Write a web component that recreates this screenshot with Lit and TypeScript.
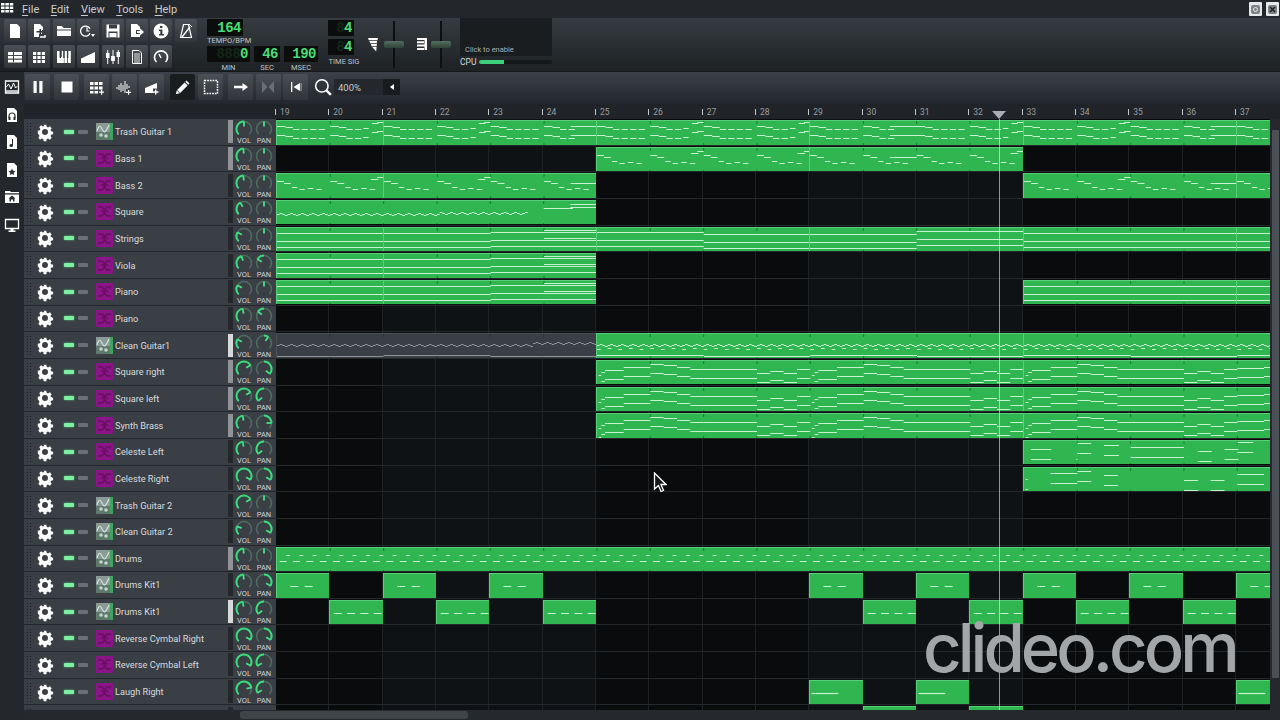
import { LitElement, html, css, svg } from "lit";
import { customElement } from "lit/decorators.js";

const B = 160 / 3;
type Note = [number, number, number];
type Clip = [number, number, boolean?];

function add(out: Note[], bar: number, list: Note[], dy = 0) {
  for (const [s, l, y] of list) out.push([bar + s, l, y + dy]);
}
const riffA: Note[] = [[0, .16, 6], [.16, .14, 7], [.3, .12, 9], [.46, .12, 9], [.62, .12, 9], [.78, .12, 9]];
const riffB: Note[] = [[0, .16, 6], [.16, .14, 7], [.3, .12, 9], [.46, .12, 9], [.62, .1, 8]];

function trash(): Note[] {
  const o: Note[] = [];
  for (let b = 0; b < 19; b++) {
    if (b % 2 === 0) {
      add(o, b, riffA, -1); add(o, b, riffA, 8);
    } else if (b % 6 === 5) {
      add(o, b, riffB.slice(0, 4), -1); add(o, b, riffB.slice(0, 4), 8);
      o.push([b + .5, .5, 5], [b + .5, .5, 14]);
    } else {
      add(o, b, riffB, -1); add(o, b, riffB, 8);
      o.push([b + .78, .12, 2], [b + .88, .12, 1], [b + .78, .12, 11], [b + .88, .12, 10]);
    }
  }
  return o;
}
function bass(): Note[] {
  const o: Note[] = [];
  for (let b = 0; b < 19; b++) {
    add(o, b, [[0, .13, 7], [.13, .13, 9], [.28, .1, 13], [.42, .1, 15], [.58, .1, 14], [.74, .1, 15]]);
    if (b % 2 === 1 && b % 6 !== 5) o.push([b + .76, .14, 5], [b + .88, .12, 3]);
    if (b % 6 === 5) o.push([b + .5, .5, 9]);
  }
  return o;
}
function square(): Note[] {
  const o: Note[] = [];
  const seq = [13, 12, 13, 14];
  for (let i = 0; i < 94; i++) o.push([i * .05, .05, seq[i % 4] + (i > 60 ? -1 : 0)]);
  o.push([5, .55, 7], [5.5, .5, 3], [5.5, .5, 6]);
  return o;
}
function strings(): Note[] {
  const o: Note[] = [];
  const lv = [5, 5, 4, 4, 6, 6, 3, 5];
  for (let b = 0; b < 19; b += 2) {
    const y = lv[(b / 2) % 8];
    o.push([b, 2, y], [b, 2, y + 8], [b, 2, y + 14]);
    if (b === 4) o.push([b + 1, 1, y - 2], [b + 1, 1, y + 6]);
  }
  return o;
}
function wave(): Note[] {
  const o: Note[] = [];
  const seq = [11, 10, 11, 12];
  for (let i = 0; i < 380; i++) o.push([i * .05, .05, seq[i % 4] + (i >= 96 && i < 120 ? -2 : 0)]);
  for (let b = 0; b < 19; b += 2) o.push([b, 2, b % 4 === 2 ? 21 : 22]);
  return o;
}
function wave2(): Note[] {
  const o: Note[] = [...wave()];
  for (let i = 120; i < 380; i += 4) o.push([i * .05, .07, i % 8 === 0 ? 15 : 14]);
  return o;
}
const seqBars: Note[][] = [
  [[.03, .05, 14], [.08, .07, 11], [.15, .35, 9], [.5, .5, 6]],
  [[0, .25, 3], [.25, .25, 4], [.5, .25, 6], [.75, .25, 8]],
  [[0, 1, 8]],
  [[0, .25, 12], [.25, .25, 10], [.5, .25, 12], [.75, .25, 8]],
];
function brass(shift: number): Note[] {
  const o: Note[] = [];
  for (let b = 6; b < 19; b++) {
    const m = b === 18 ? [[0, .5, 7], [.5, .5, 6]] as Note[] : seqBars[(b - 6) % 4];
    add(o, b, m, shift); add(o, b, m, shift + 9);
  }
  return o;
}
function celeste(a: Note[][]): Note[] {
  const o: Note[] = [];
  for (let b = 14; b < 19; b++) {
    const m = a[b - 14];
    add(o, b, m); add(o, b, m, 10);
  }
  return o;
}
function drums(): Note[] {
  const o: Note[] = [];
  for (let b = 0; b < 19; b++)
    for (const s of [.05, .3, .55, .8]) o.push([b + s, .13, 13], [b + s + .12, .07, 7]);
  return o;
}
function kit(n: number[]): Note[] {
  const o: Note[] = [];
  for (let b = 0; b < 19; b++) for (const s of n) o.push([b + s, .15, 12]);
  return o;
}
function laugh(): Note[] {
  const o: Note[] = [];
  for (let b = 0; b < 19; b++) o.push([b + .03, .5, 12]);
  return o;
}

const full: Clip[] = [[0, 2], [2, 4], [6, 4], [10, 4], [14, 4], [18, 1]];
const one = (...a: number[]): Clip[] => a.map((s) => [s, 1] as Clip);

interface Track { name: string; img?: boolean; vol: number; pan: number; fader?: number; clips?: Clip[]; notes?: Note[]; }

const tracks: Track[] = [
  { name: "Trash Guitar 1", img: true, vol: 0, pan: 0, fader: 1, clips: full, notes: trash() },
  { name: "Bass 1", vol: -5, pan: 0, fader: 1, clips: [[6, 4], [10, 4]], notes: bass() },
  { name: "Bass 2", vol: -5, pan: 0, clips: [[0, 2], [2, 4], [14, 4], [18, 1]], notes: bass() },
  { name: "Square", vol: -30, pan: 0, clips: [[0, 6]], notes: square() },
  { name: "Strings", vol: -60, pan: 0, clips: full, notes: strings() },
  { name: "Viola", vol: -20, pan: -60, clips: [[0, 2], [2, 4]], notes: strings() },
  { name: "Piano", vol: -60, pan: 0, clips: [[0, 2], [2, 4], [14, 4], [18, 1]], notes: strings() },
  { name: "Piano", vol: -10, pan: -55 },
  { name: "Clean Guitar1", img: true, vol: -60, pan: 35, fader: 2, clips: [[0, 6, true], [6, 8], [14, 5]], notes: wave2() },
  { name: "Square right", vol: 60, pan: 130, fader: 1, clips: [[6, 8], [14, 5]], notes: brass(0) },
  { name: "Square left", vol: 60, pan: -130, fader: 1, clips: [[6, 8], [14, 5]], notes: brass(0) },
  { name: "Synth Brass", vol: -10, pan: 90, fader: 1, clips: [[6, 8], [14, 5]], notes: brass(0) },
  { name: "Celeste Left", vol: -10, pan: -130, clips: [[14, 5]], notes: celeste([
    [[.13, .38, 8], [.98, .02, 18]], [[0, .26, 2], [.5, .28, 4]], [[0, 1, 6]], [[.26, .26, 10], [.76, .26, 8]], [[0, .3, 1]],
  ]) },
  { name: "Celeste Right", vol: 120, pan: 120, clips: [[14, 5]], notes: celeste([
    [[.03, .04, 11], [.5, .5, 5]], [[0, .26, 3], [.5, .26, 7]], [[0, 0, 6]], [[.0, .26, 12], [.5, .26, 12]], [[0, .5, 6]],
  ]) },
  { name: "Trash Guitar 2", img: true, vol: 60, pan: 0 },
  { name: "Clean Guitar 2", img: true, vol: -70, pan: 120 },
  { name: "Drums", img: true, vol: -5, pan: 0, fader: 1, clips: [[0, 19]], notes: drums() },
  { name: "Drums Kit1", img: true, vol: -5, pan: 120, clips: one(0, 2, 4, 10, 12, 14, 16, 18), notes: kit([.25, .52]) },
  { name: "Drums Kit1", img: true, vol: -10, pan: -130, fader: 2, clips: one(1, 3, 5, 11, 13, 15, 17), notes: kit([.07, .32, .57, .82]) },
  { name: "Reverse Cymbal Right", vol: 120, pan: 120 },
  { name: "Reverse Cymbal Left", vol: 120, pan: -120 },
  { name: "Laugh Right", vol: 80, pan: -120, clips: one(10, 12, 18), notes: laugh() },
  { name: "", vol: 100, pan: -100, clips: one(11, 13), notes: [] },
];

const P = (d: string) => svg`<path d=${d} fill="#fff"></path>`;
const S = (d: string, w = 1.5) => svg`<path d=${d} fill="none" stroke="#fff" stroke-width=${w}></path>`;

const icons: Record<string, unknown> = {
  doc: svg`${P("M3 1h7l3 3v11H3z")}`,
  docPlus: svg`${P("M3 1h6l3 3v3h-1v4H8v3H3z")}<path d="M5.500 8h3v-2h1.500v2h2v1.500h-2v2H8.500v-2h-3z" fill="#33383d"></path>${S("M9 14h5v-2")}`,
  folder: svg`${P("M1 3h5l1.500 2H15v1.500H1z")}${P("M1 7.500h14V13H1z")}`,
  recent: svg`${S("M10 5.800a5 5 0 1 0 .1 4.500", 1.300)}${S("M7 4.500v3.500h2.500", 1.200)}${P("M11 11h4l-2 3z")}`,
  save: svg`${P("M1.500 1.500h13v13h-13z")}<path d="M4 1.500h8v4H4zM3.500 8.500h9v6h-9z" fill="#3a3f45"></path><path d="M4.500 10h7v4h-7z" fill="#fff"></path>`,
  exportDoc: svg`${P("M2 1h6l3 3v3H7v4h4v3H2z")}${P("M8 8h3V5.500L15 9l-4 3.500V10H8z")}`,
  info: svg`<circle cx="8" cy="8" r="7.500" fill="#fff"></circle><path d="M7 3h2.400v2H7zM6 6.500h3.400V11H11v1.500H6V11h1.300V8H6z" fill="#363b40"></path>`,
  metro: svg`${S("M5.500 1.500h5l3 13h-11z", 1.200)}${S("M4 14l8-10", 1.300)}${S("M11 1l3 3", 1)}`,
  song: svg`${P("M1 3h14v3H1zM1 6.800h14v3H1zM1 10.600h14v3H1z")}<path d="M6 3h1v10.500H6zM1 6h14v.8H1zM1 9.800h14v.8H1z" fill="#3a3f45"></path>`,
  beat: svg`${P("M2 3h3.200v3H2zM6.400 3h3.200v3H6.400zM10.800 3H14v3h-3.200zM2 7h3.200v3H2zM6.400 7h3.200v3H6.400zM10.800 7H14v3h-3.200zM2 11h3.200v3H2zM6.400 11h3.200v3H6.400zM10.800 11H14v3h-3.200z")}`,
  piano: svg`${P("M1 2h2.800v12H1zM4.600 8h2.800v6H4.600zM8.400 2h2.800v12H8.400zM12 2h2.800v12H12zM3.800 2h1v12h-1z")}${P("M5.800 2h2v12h-2z")}<path d="M3.600 2h1.400v7H3.600zM7.200 2h1.400v7H7.200zM10.900 2h1.400v7h-1.400z" fill="#383d42"></path>`,
  ramp: svg`${P("M1 14V9.500L15 3v11z")}`,
  mixer: svg`${P("M2.200 1h1v3h1.300v5H3.200v6h-1V9H1V4h1.200zM7.500 1h1v6h1.400v5H8.500v3h-1v-3H6.100V7h1.400zM12.800 1h1v2H15v5h-1.200v7h-1V8h-1.300V3h1.300z")}`,
  notes: svg`${S("M3.500 1.500h6.500l2.500 2.500v10.500h-9z", 1)}${S("M5 5h6M5 7h6M5 9h6M5 11h6M5 13h6", .9)}`,
  gauge: svg`${S("M3.500 13a6.500 6.500 0 1 1 9 0", 1.700)}${S("M8 9L6 5", 1.500)}`,
  pause: svg`${P("M3.500 2h3.200v12H3.500zM9.300 2h3.200v12H9.300z")}`,
  stop: svg`${P("M2.500 2.500h11v11h-11z")}`,
  beatPlus: svg`${P("M1 3h3.500v3H1zM5.500 3H9v3H5.500zM10 3h3.500v3H10zM1 7.500h3.500v3H1zM5.500 7.500H9v3H5.500zM10 7.500h3.500v3H10zM1 12h3.500v2.500H1zM5.500 12H9v2.500H5.500z")}${P("M12 10.500h1.200v2H15v1.200h-1.800v2H12v-2h-2v-1.200h2z")}`,
  wavePlus: svg`${S("M1 8v2M3 6v5M5 4v9M7 6v6M9 2v12M11 5v5M13 7v2", 1)}${P("M12 11h1.200v1.800H15V14h-1.800v1.800H12V14h-2v-1.200h2z")}`,
  rampPlus: svg`${P("M1 14V9L13 4v5.500H9V14z")}${P("M11 10.500h1.400v1.800H14.500v1.400h-2.100V15.500H11v-1.800H9v-1.400h2z")}`,
  pencil: svg`${P("M11.500 1.500l3 3-1.200 1.200-3-3zM9.600 3.400l3 3-7.500 7.500-3-3zM1.700 11.400l2.900 2.900-3.800 .9z")}`,
  select: svg`<path d="M1.500 1.500h13v13h-13z" fill="none" stroke="#fff" stroke-width="1.500" stroke-dasharray="1.700 1"></path>`,
  arrow: svg`${P("M1 6.800h8.500V4L15 8l-5.500 4V9.200H1z")}`,
  loop: svg`<path d="M2 2l5.500 6L2 14zM14 2L8.500 8l5.500 6z" fill="#6a6f75"></path>`,
  skip: svg`${P("M3 3h1.300v10H3zM12 4v8L5.500 8z")}<path d="M12.500 4h1.300v8h-1.300z" fill="#8a8f95"></path>`,
  mag: svg`<circle cx="7" cy="7" r="5.500" fill="none" stroke="#fff" stroke-width="1.400"></circle>${S("M11 11l4 4", 2)}`,
  vol: svg`${P("M1 2h10l-.6 2.200H1.800zM2.400 5h7.800l-.5 2.200H3.200zM3.800 8h6.200l-.4 2.200H4.600zM5.200 11h4.400L9.200 15.500z")}`,
  pitch: svg`${P("M3 2h9v2H3zM3 5.300h7v2H3zM3 8.600h9v2H3zM3 11.900h7v2H3z")}<path d="M10.500 2H13v12h-2.500z" fill="#fff"></path>`,
  sInst: svg`<path d="M1.500 2h13v12h-13z" fill="none" stroke="#fff" stroke-width="1.300"></path>${S("M2.500 8l2-3 2.500 5 2.500-6 2 5 2-2", 1)}${S("M2 12h12", 1.400)}`,
  sHead: svg`${P("M3 1h7l3 3v11H3z")}<path d="M5 11V9a3 3 0 0 1 6 0v2" fill="none" stroke="#2a2e32" stroke-width="1.200"></path><path d="M4.500 10h2v3h-2zM9.500 10h2v3h-2z" fill="#2a2e32"></path>`,
  sNote: svg`${P("M3 1h7l3 3v11H3z")}<path d="M8 5h1v6.500a1.800 1.500 0 1 1-1-1.300z" fill="#2a2e32"></path>`,
  sStar: svg`${P("M3 1h7l3 3v11H3z")}<path d="M8 6.500l1.100 2.200 2.400.3-1.800 1.700.5 2.400L8 11.900l-2.200 1.200.5-2.400L4.500 9l2.400-.3z" fill="#2a2e32"></path>`,
  sHome: svg`${P("M1 2h5l1 1h8v1.300H1z")}${P("M1 5.500h14V14H1z")}<path d="M8 6.500l3.500 3h-1v3H9v-2H7v2H5.500v-3h-1z" fill="#2a2e32"></path>`,
  sMon: svg`<path d="M1.500 2.500h13v9h-13z" fill="none" stroke="#fff" stroke-width="1.300"></path>${P("M6.500 12h3v1.500h2V15h-7v-1.500h2z")}`,
  win: svg`${P("M0 1h4v3H0zM5 1h4v3H5zM10 1h4v3h-4zM0 5h4v3H0zM5 5h4v3H5zM10 5h4v3h-4zM0 9h4v3H0zM5 9h4v3H5zM10 9h4v3h-4z")}`,
};

const ic = (n: string, size = 16) =>
  html`<svg width=${size} height=${size} viewBox="0 0 16 16">${icons[n]}</svg>`;

function pol(a: number, r: number) {
  const t = (a * Math.PI) / 180;
  return [9 + r * Math.sin(t), 9 - r * Math.cos(t)];
}
function arc(a: number, b: number, r: number) {
  const [lo, hi] = a < b ? [a, b] : [b, a];
  const [x1, y1] = pol(lo, r);
  const [x2, y2] = pol(hi, r);
  return `M${x1.toFixed(2)} ${y1.toFixed(2)}A${r} ${r} 0 ${hi - lo > 180 ? 1 : 0} 1 ${x2.toFixed(2)} ${y2.toFixed(2)}`;
}
function knob(val: number, from: number, label: string) {
  const [x1, y1] = pol(val, 2.5);
  const [x2, y2] = pol(val, 7.5);
  return html`<div class="knob">
    <svg width="18" height="18" viewBox="0 0 18 18">
      <path d=${arc(-135, 135, 7.5)} fill="none" stroke="#4f6b5e" stroke-width="1.600"></path>
      <path d=${arc(from, val, 7.5)} fill="none" stroke="#38dc78" stroke-width="2"></path>
      <path d="M${x1} ${y1}L${x2} ${y2}" stroke="#45e085" stroke-width="1.800"></path>
    </svg>
    ${label ? html`<span>${label}</span>` : ""}
  </div>`;
}

const instA = html`<svg width="17" height="17" viewBox="0 0 17 17">
  <rect width="17" height="17" fill="#8a9a96"></rect>
  <rect x="14" width="3" height="17" fill="#3fa45e"></rect>
  <rect y="9" width="14" height="8" fill="#5f7a6c"></rect>
  <path d="M1 8C3 2 4 2 6 6S9 11 13 2" fill="none" stroke="#d8e8df" stroke-width="1.100"></path>
  <circle cx="5" cy="12" r="1.800" fill="#c6d2cc"></circle><circle cx="10" cy="13" r="1.800" fill="#c6d2cc"></circle>
</svg>`;
const instB = html`<svg width="17" height="17" viewBox="0 0 17 17">
  <rect width="17" height="17" rx="1" fill="#8b1588"></rect>
  <path d="M2 4h4l2 2v2H5M15 4h-4L9 6v2h3M2 13h4l2-2V9M15 13h-4l-2-2V9" fill="none" stroke="#65105f" stroke-width="1.300"></path>
</svg>`;

const lcdText = (ghost: string, value: string) =>
  html`<span class="seg">${ghost ? html`<em>${ghost}</em>` : ""}${value}</span>`;

@customElement("app-root")
export class AppRoot extends LitElement {
  static styles = css`
    :host { display: block; width: 1280px; height: 720px; position: relative; overflow: hidden; background: #24282c;
      font-family: Roboto, "Liberation Sans", sans-serif; color: #d6d9dc; }
    .menu { height: 18px; display: flex; align-items: center; background: #23272b; padding-left: 1px; }
    .menu .items { display: flex; margin-left: 7px; gap: 11.500px; font-size: 11px; color: #c9ccd0; }
    .menu u { text-decoration-thickness: 1px; text-underline-offset: 1.500px; }
    .win { margin-left: auto; display: flex; gap: 4px; padding-right: 1px; }
    .win i { width: 13px; height: 14px; background: #e6e8e9; border-radius: 1px; display: flex; align-items: center; justify-content: center; }
    .top { height: 53px; display: flex; background: linear-gradient(#363c41, #1d2124); border-bottom: 1px solid #15181a; }
    .tbtns { width: 198px; padding: 1px 0 0 4px; display: grid; grid-template-columns: repeat(8, 22px); grid-auto-rows: 23px; gap: 3px 2.400px; align-content: start; }
    .btn { display: flex; align-items: center; justify-content: center; border-radius: 2px;
      background: linear-gradient(#4b5056, #31353a); }
    .lcds { width: 117px; margin-left: 5px; }
    .lcd { background: #0a0d0c; display: flex; justify-content: flex-end; align-items: center; font-family: "Liberation Mono", monospace;
      font-weight: 700; color: #47dd76; border-radius: 1px; padding-right: 2px; box-sizing: border-box; font-size: 14px; letter-spacing: -.5px; line-height: 16px; }
    .seg em { color: #13261a; font-style: normal; }
    .cap { font-size: 7.500px; color: #bfc3c6; text-align: center; line-height: 9px; white-space: nowrap; }
    .tempo { width: 36px; height: 17px; margin-top: 1px; }
    .tcap { width: 45px; text-align: left; margin-top: 0; }
    .lrow { display: flex; gap: 4px; margin-top: 1px; }
    .lrow .cap { margin-top: 1px; }
    .min { width: 43px; height: 16px; }
    .sec { width: 26px; height: 16px; }
    .msec { width: 34px; height: 16px; }
    .ts { width: 38px; margin-left: 4px; padding-top: 2px; }
    .ts .lcd { width: 26px; height: 16px; margin-bottom: 3px; }
    .ts .cap { width: 32px; margin-top: -1px; }
    .mf { display: flex; width: 47px; flex: none; align-items: center; }
    .mf .gl { width: 18px; display: flex; justify-content: center; margin-top: -2px; }
    .fader { width: 20px; height: 47px; position: relative; display: flex; justify-content: center; align-items: center; margin-top: -1px; }
    .fader::before { content: ""; width: 2px; height: 47px; background: #0c0e10; }
    .fader::after { content: ""; position: absolute; left: 0; width: 20px; height: 7px; top: 20px; background: linear-gradient(#556f62, #2f4238); border-radius: 2px; }
    .cpu { width: 92px; flex: none; }
    .graph { height: 38px; background: #1a1d20; display: flex; align-items: flex-end; font-size: 7.500px; color: #a9adb1; padding: 0 0 2px 5px; box-sizing: border-box; }
    .cl { display: flex; align-items: center; gap: 3px; font-size: 8.500px; color: #d6d9dc; margin-top: 1px; }
    .cbar { flex: 1; height: 4px; background: #14181a; border-radius: 2px; overflow: hidden; }
    .cbar b { display: block; width: 25px; height: 100%; background: #3ad07c; }
    .main { display: flex; height: 648px; }
    .side { width: 24px; display: flex; flex-direction: column; align-items: center; padding-top: 7px; gap: 11.500px; background: #24282c; }
    .content { flex: 1; min-width: 0; display: flex; flex-direction: column; }
    .tb2 { height: 32px; display: flex; align-items: center; background: linear-gradient(#3c4149, #23272c); padding: 0 0 2px 1px; box-sizing: border-box; }
    .tb2 .btn { width: 25px; height: 26px; }
    .tb2 .on { background: #1a1d20; }
    .g1 { display: flex; gap: 4px; }
    .g2 { display: flex; gap: 2.500px; margin-left: 5px; }
    .g3 { display: flex; gap: 3px; margin-left: 6px; }
    .g4 { display: flex; gap: 2.500px; margin-left: 5px; }
    .mag { margin-left: 6px; display: flex; }
    .combo { margin-left: 2px; width: 66px; height: 16px; display: flex; background: #24282d; font-size: 9.500px; color: #c6c9cc; align-items: center; padding-left: 4px; box-sizing: border-box; }
    .combo span { flex: 1; }
    .combo i { width: 17px; height: 100%; background: #191c1f; display: flex; align-items: center; justify-content: center; }
    .combo i b { border: 3px solid transparent; border-right: 4px solid #fff; border-left: 0; }
    .ruler { height: 15px; display: grid; grid-template-columns: repeat(19, 53.333px); padding-left: 251px; background: #202428; overflow: hidden; }
    .ruler div { font-size: 8.500px; color: #9a9ea2; position: relative; padding-left: 5px; line-height: 10px; margin-top: 3px; }
    .ruler div::before { content: ""; position: absolute; left: 0; top: 2px; width: 1px; height: 6px; background: #c5c8cb; }
    .body { flex: 1; min-height: 0; display: flex; flex-direction: column; }
    .mid { flex: 1; min-height: 0; display: flex; }
    .rows { width: 1246px; overflow: hidden; }
    .row { height: 26.667px; display: flex; box-sizing: border-box; }
    .hd { width: 252px; flex: none; display: flex; align-items: center; background: #3a3f46; border-bottom: 1.500px solid #23272b; box-sizing: border-box; }
    .grip { width: 6px; height: 20px; margin-left: 2px; background-image: radial-gradient(#1e2226 .6px, transparent .8px); background-size: 3px 3px; }
    .gear { width: 20px; margin-left: 3px; margin-right: 9px; display: flex; }
    .led { width: 10px; height: 4px; background: #7cf0a0; border-radius: 1px; box-shadow: 0 0 2px #50e080; }
    .mute { width: 10px; height: 4px; margin-left: 4px; background: #6a7078; border-radius: 1px; margin-right: 8px; }
    .name { font-size: 9.200px; margin-left: 2px; color: #d8dbde; width: 113px; white-space: nowrap; overflow: hidden; }
    .fd { width: 5px; height: 23px; background: #24282d; }
    .fd.f1 { background: #8f9397; }
    .fd.f2 { background: #d6d8da; }
    .knob { width: 20px; display: flex; flex-direction: column; align-items: center; margin-top: 1px; }
    .knob span { font-size: 7.500px; line-height: 7px; color: #d0d3d6; margin-top: -1px; }
    .k1 { margin-left: 1px; display: flex; }
    .lane { width: 994px; flex: none; display: grid; grid-template-columns: repeat(19, 53.333px); grid-template-rows: 24.500px; overflow: hidden;
      box-sizing: border-box; padding-top: 1px;
      background:
        linear-gradient(#24282b, #24282b) left bottom / 100% 1px no-repeat,
        repeating-linear-gradient(to right, transparent 0 52.333px, #1f2225 52.333px 53.333px),
        linear-gradient(to right, #0a0b0d 107px, #0f1215 107px 320px, #0a0b0d 320px 533px, #0f1215 533px 747px, #0a0b0d 747px); }
    .clip { background: #30b651; border: 1px solid #58cf78; border-width: 1px 0 0 1px; min-width: 0; overflow: hidden; display: flex; box-sizing: border-box; }
    .clip.m { background: #3a3f46; border-color: #4a4f56; }
    .clip svg { flex: none; }
    .vs { width: 10px; background: #25292d; padding: 11px 1px 0 2px; box-sizing: border-box; }
    .vs b { display: block; height: 548px; background: #4b5056; border-radius: 1px; }
    .hs { height: 10px; background: #25292d; padding-left: 216px; display: flex; }
    .hs b { width: 228px; height: 8px; margin-top: 1px; background: #3f4449; border-radius: 3px; }
    .playhead { position: absolute; left: 999px; top: 119px; width: 1px; height: 591px; background: rgba(255,255,255,.55); }
    .tri { position: absolute; left: 992px; top: 111px; width: 0; height: 0; border: 7px solid transparent; border-top: 8px solid #a9acb2; border-bottom: 0; }
    .cursor { position: absolute; left: 653px; top: 472px; }
    .mark { position: absolute; left: 923px; top: 607px; font-family: Inter, "Open Sans", sans-serif; font-weight: 500; font-size: 67px; line-height: 82px; letter-spacing: -4px; color: #a3a6a8; }
  `;

  private clip(t: Track, c: Clip) {
    const [start, len, muted] = c;
    const w = len * B;
    const x0 = start * B;
    const d = (t.notes ?? []).filter(([s, l]) => l > 0 && s + l > start && s < start + len)
      .map(([s, l, y]) => `M${(s * B).toFixed(1)} ${y + .5}h${(l * B).toFixed(1)}`).join("");
    let ticks = "";
    for (let b = start + 1; b < start + len; b++) ticks += `M${(b * B).toFixed(1)} 0v3M${(b * B).toFixed(1)} 22v3`;
    return html`<div class="clip ${muted ? "m" : ""}" style="grid-column:${start + 1} / span ${len}">
      <svg width=${w} height="25" viewBox="${x0} 0 ${w} 25">
        <path d=${ticks} stroke=${muted ? "#2c3036" : "#1b7a37"} stroke-width="1" fill="none"></path>
        <path d=${d} stroke=${muted ? "#8d9298" : "#c6f2d1"} stroke-width="1.200" fill="none"></path>
      </svg>
    </div>`;
  }

  private row(t: Track) {
    return html`<div class="row">
      <div class="hd">
        <div class="grip"></div>
        <div class="gear"><svg width="20" height="20" viewBox="0 0 20 20">
          <path fill="#fff" fill-rule="evenodd" d="M8.500 2h3l.4 2.300 1.500.7 2-1.300 2 2-1.300 2 .7 1.500 2.200.4v3l-2.200.4-.7 1.500 1.300 2-2 2-2-1.300-1.500.7-.4 2.300h-3l-.4-2.300-1.500-.7-2 1.300-2-2 1.300-2-.7-1.500L2 11.500v-3l2.200-.4.700-1.500-1.300-2 2-2 2 1.300 1.500-.7zM10 6.700a3.300 3.300 0 1 0 0 6.600 3.300 3.300 0 0 0 0-6.600z" transform="translate(1 1) scale(.9)"></path>
        </svg></div>
        <div class="led"></div>
        <div class="mute"></div>
        ${t.img ? instA : instB}
        <div class="name">${t.name}</div>
        <div class="fd ${t.fader ? "f" + t.fader : ""}"></div>
        <div class="k1">${knob(t.vol, -135, t.name ? "VOL" : "")}${knob(t.pan, 0, t.name ? "PAN" : "")}</div>
      </div>
      <div class="lane">${(t.clips ?? []).map((c) => this.clip(t, c))}</div>
    </div>`;
  }

  render() {
    const bars = Array.from({ length: 19 }, (_, i) => 19 + i);
    const top = ["doc", "docPlus", "folder", "recent", "save", "exportDoc", "info", "metro", "song", "beat", "piano", "ramp", "mixer", "notes", "gauge"];
    return html`
      <div class="menu">
        ${ic("win", 14)}
        <div class="items">
          <span><u>F</u>ile</span><span><u>E</u>dit</span><span><u>V</u>iew</span><span><u>T</u>ools</span><span><u>H</u>elp</span>
        </div>
        <div class="win">
          <i><svg width="9" height="9" viewBox="0 0 9 9"><rect width="9" height="9" rx="2" fill="#7d8286"></rect><circle cx="4.500" cy="4.500" r="2" fill="none" stroke="#e6e8e9"></circle></svg></i>
          <i><svg width="9" height="9" viewBox="0 0 9 9"><rect width="9" height="9" rx="2" fill="#7d8286"></rect><path d="M2 2l5 5M7 2l-5 5" stroke="#1c1f22" stroke-width="1.400"></path></svg></i>
        </div>
      </div>
      <div class="top">
        <div class="tbtns">${top.map((n) => html`<div class="btn">${ic(n)}</div>`)}</div>
        <div class="lcds">
          <div class="lcd tempo">${lcdText("", "164")}</div>
          <div class="cap tcap">TEMPO/BPM</div>
          <div class="lrow">
            <div><div class="lcd min">${lcdText("888", "0")}</div><div class="cap">MIN</div></div>
            <div><div class="lcd sec">${lcdText("", "46")}</div><div class="cap">SEC</div></div>
            <div><div class="lcd msec">${lcdText("", "190")}</div><div class="cap">MSEC</div></div>
          </div>
        </div>
        <div class="ts">
          <div class="lcd">${lcdText("8", "4")}</div>
          <div class="lcd">${lcdText("8", "4")}</div>
          <div class="cap">TIME SIG</div>
        </div>
        <div class="mf"><div class="gl">${ic("vol", 16)}</div><div class="fader"></div></div>
        <div class="mf"><div class="gl">${ic("pitch", 16)}</div><div class="fader"></div></div>
        <div class="cpu">
          <div class="graph">Click to enable</div>
          <div class="cl">CPU<div class="cbar"><b></b></div></div>
        </div>
      </div>
      <div class="main">
        <div class="side">
          ${["sInst", "sHead", "sNote", "sStar", "sHome", "sMon"].map((n) => ic(n))}
        </div>
        <div class="content">
          <div class="tb2">
            <div class="g1"><div class="btn">${ic("pause")}</div><div class="btn">${ic("stop")}</div></div>
            <div class="g2"><div class="btn">${ic("beatPlus")}</div><div class="btn">${ic("wavePlus")}</div><div class="btn">${ic("rampPlus")}</div></div>
            <div class="g3"><div class="btn on">${ic("pencil")}</div><div class="btn">${ic("select")}</div></div>
            <div class="g4"><div class="btn">${ic("arrow")}</div><div class="btn">${ic("loop")}</div><div class="btn">${ic("skip")}</div></div>
            <div class="mag">${ic("mag", 18)}</div>
            <div class="combo"><span>400%</span><i><b></b></i></div>
          </div>
          <div class="ruler">${bars.map((b) => html`<div>${b}</div>`)}</div>
          <div class="body">
            <div class="mid">
              <div class="rows">${tracks.map((t) => this.row(t))}</div>
              <div class="vs"><b></b></div>
            </div>
            <div class="hs"><b></b></div>
          </div>
        </div>
      </div>
      <div class="tri"></div>
      <div class="playhead"></div>
      <div class="mark">clideo.com</div>
      <svg class="cursor" width="14" height="22" viewBox="0 0 14 22">
        <path d="M1.500 1v16l4-3.500 2.500 6 2.500-1-2.500-6h5z" fill="#14181a" stroke="#fff" stroke-width="1.300"></path>
      </svg>
    `;
  }
}
